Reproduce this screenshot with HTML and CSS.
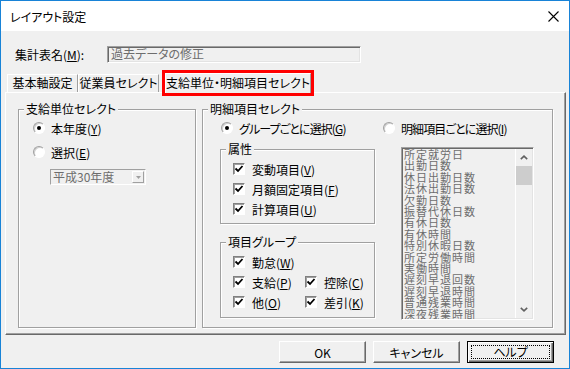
FILE: index.html
```html
<!DOCTYPE html>
<html lang="ja">
<head>
    <meta charset="UTF-8">
    <title>レイアウト設定</title>
    <link rel="stylesheet" href="styles.css">
</head>
<body>
    <div class="window">
        <div class="titlebar">
            <span class="title">レイアウト設定</span>
            <svg class="close" width="11" height="11" viewBox="0 0 11 11">
                <path d="M0.5 0.5 L10.5 10.5 M10.5 0.5 L0.5 10.5" stroke="#000" stroke-width="1.1" fill="none"/>
            </svg>
        </div>

        <div class="client">
            <div class="name-row">
                <label>集計表名(<u>M</u>):</label>
                <div class="textbox">過去データの修正</div>
            </div>

            <div class="tabs">
                <div class="tab tab-base">基本軸設定</div>
                <div class="tab tab-staff">従業員セレクト</div>
                <div class="tab active">支給単位・明細項目セレクト</div>
            </div>

            <div class="panel">
                <!-- 支給単位 -->
                <div class="group g-unit">
                    <span class="legend">支給単位セレクト</span>
                    <div class="unit-body">
                        <div class="opt"><span class="radio on"></span>本年度(<u>Y</u>)</div>
                        <div class="opt"><span class="radio"></span>選択(<u>E</u>)</div>
                        <div class="combo">
                            <span class="combo-text">平成30年度</span>
                            <span class="combo-btn">
                                <svg width="5" height="3" viewBox="0 0 5 3"><path d="M0 0 H5 L2.5 3 Z" fill="#a0a0a0"/></svg>
                            </span>
                        </div>
                    </div>
                </div>

                <!-- 明細項目 -->
                <div class="group g-detail">
                    <span class="legend">明細項目セレクト</span>
                    <div class="detail-body">
                        <div class="opt opt-g"><span class="radio on"></span><span class="kana">グループごとに選択(<u>G</u>)</span></div>
                        <div class="opt"><span class="radio"></span><span class="kana">明細項目ごとに選択(<u>I</u>)</span></div>

                        <div class="stack">
                            <div class="group g-attr">
                                <span class="legend">属性</span>
                                <div class="check-list">
                                    <div class="opt"><span class="check"><svg width="10" height="10" viewBox="0 0 10 10"><path d="M1.5 4.5 L4 7 L8.5 2" stroke="#000" stroke-width="1.8" fill="none"/></svg></span>変動項目(<u>V</u>)</div>
                                    <div class="opt"><span class="check"><svg width="10" height="10" viewBox="0 0 10 10"><path d="M1.5 4.5 L4 7 L8.5 2" stroke="#000" stroke-width="1.8" fill="none"/></svg></span>月額固定項目(<u>F</u>)</div>
                                    <div class="opt"><span class="check"><svg width="10" height="10" viewBox="0 0 10 10"><path d="M1.5 4.5 L4 7 L8.5 2" stroke="#000" stroke-width="1.8" fill="none"/></svg></span>計算項目(<u>U</u>)</div>
                                </div>
                            </div>

                            <div class="group g-kind">
                                <span class="legend">項目グループ</span>
                                <div class="check-grid">
                                    <div class="opt wide"><span class="check"><svg width="10" height="10" viewBox="0 0 10 10"><path d="M1.5 4.5 L4 7 L8.5 2" stroke="#000" stroke-width="1.8" fill="none"/></svg></span>勤怠(<u>W</u>)</div>
                                    <div class="opt"><span class="check"><svg width="10" height="10" viewBox="0 0 10 10"><path d="M1.5 4.5 L4 7 L8.5 2" stroke="#000" stroke-width="1.8" fill="none"/></svg></span>支給(<u>P</u>)</div>
                                    <div class="opt"><span class="check"><svg width="10" height="10" viewBox="0 0 10 10"><path d="M1.5 4.5 L4 7 L8.5 2" stroke="#000" stroke-width="1.8" fill="none"/></svg></span>控除(<u>C</u>)</div>
                                    <div class="opt"><span class="check"><svg width="10" height="10" viewBox="0 0 10 10"><path d="M1.5 4.5 L4 7 L8.5 2" stroke="#000" stroke-width="1.8" fill="none"/></svg></span>他(<u>O</u>)</div>
                                    <div class="opt"><span class="check"><svg width="10" height="10" viewBox="0 0 10 10"><path d="M1.5 4.5 L4 7 L8.5 2" stroke="#000" stroke-width="1.8" fill="none"/></svg></span>差引(<u>K</u>)</div>
                                </div>
                            </div>
                        </div>

                        <div class="listbox">
                            <div class="items">
                                <div>所定就労日</div>
                                <div>出勤日数</div>
                                <div>休日出勤日数</div>
                                <div>法休出勤日数</div>
                                <div>欠勤日数</div>
                                <div>振替代休日数</div>
                                <div>有休日数</div>
                                <div>有休時間</div>
                                <div>特別休暇日数</div>
                                <div>所定労働時間</div>
                                <div>実働時間</div>
                                <div>遅刻早退回数</div>
                                <div>遅刻早退時間</div>
                                <div>普通残業時間</div>
                                <div>深夜残業時間</div>
                            </div>
                            <div class="scrollbar">
                                <span class="sb-btn">
                                    <svg width="8" height="5" viewBox="0 0 8 5"><path d="M0.8 4.2 L4 1.2 L7.2 4.2" stroke="#606060" stroke-width="1.6" fill="none"/></svg>
                                </span>
                                <span class="thumb"></span>
                                <span class="track"></span>
                                <span class="sb-btn">
                                    <svg width="8" height="5" viewBox="0 0 8 5"><path d="M0.8 0.8 L4 3.8 L7.2 0.8" stroke="#606060" stroke-width="1.6" fill="none"/></svg>
                                </span>
                            </div>
                        </div>
                    </div>
                </div>
            </div>

            <div class="buttons">
                <button class="btn">OK</button>
                <button class="btn">キャンセル</button>
                <button class="btn default"><span class="focus">ヘルプ</span></button>
            </div>
        </div>
    </div>
</body>
</html>
```

FILE: styles.css
```css
* {
    margin: 0;
    padding: 0;
    box-sizing: border-box;
}

body {
    background: #fff;
    font-family: "Noto Sans CJK JP", "Noto Sans", sans-serif;
    font-size: 12px;
    font-feature-settings: "palt";
    color: #000;
}

u {
    text-underline-offset: 1px;
}

.window {
    width: 570px;
    height: 369px;
    border: 1px solid #1883d7;
    background: #f0f0f0;
    display: flex;
    flex-direction: column;
}

.titlebar {
    height: 30px;
    background: #fff;
    display: flex;
    align-items: center;
    justify-content: space-between;
    padding: 0 10px 0 9px;
}

.client {
    flex: 1;
    padding-top: 15px;
}

/* 集計表名 */
.name-row {
    display: flex;
    align-items: center;
    height: 17px;
    padding-left: 14px;
}

.name-row label {
    width: 92px;
}

.textbox {
    width: 254px;
    height: 17px;
    line-height: 14px;
    padding-left: 3px;
    color: #6d6d6d;
    border: 1px solid;
    border-color: #a0a0a0 #fff #fff #a0a0a0;
    box-shadow: inset 1px 1px 0 #696969, inset -1px -1px 0 #e3e3e3;
}

/* タブ */
.tabs {
    display: flex;
    align-items: flex-end;
    height: 21px;
    margin-top: 8px;
    padding-left: 6px;
}

.tab {
    height: 18px;
    line-height: 16px;
    text-align: center;
    border: 1px solid;
    border-bottom: none;
    border-color: #fff #a0a0a0 transparent #fff;
}

.tab-base { width: 71px; }
.tab-staff { width: 81px; }

.tab.active {
    width: 146px;
    height: 20px;
    line-height: 18px;
    margin-left: 6px;
    margin-bottom: -1px;
    background: #f0f0f0;
    outline: 3px solid #f00;
    position: relative;
    z-index: 1;
}

.panel {
    width: 561px;
    height: 243px;
    margin-left: 4px;
    display: flex;
    gap: 6px;
    padding: 16px 12px 6px 12px;
    border: 1px solid;
    border-color: #fff #696969 #696969 #fff;
    box-shadow: inset -1px -1px 0 #a0a0a0;
}

/* グループボックス */
.group {
    display: flex;
    flex-direction: column;
    border: 1px solid #a0a0a0;
    box-shadow: 1px 1px 0 #fff, inset 1px 1px 0 #fff;
}

.legend {
    align-self: flex-start;
    line-height: 16px;
    margin: -9px 0 0 5px;
    padding: 0 2px;
    background: #f0f0f0;
}

.g-unit { width: 178px; }
.g-detail { flex: 1; }

.unit-body {
    display: flex;
    flex-direction: column;
    gap: 8px;
    padding: 3px 0 0 14px;
}

.opt {
    display: flex;
    align-items: center;
    height: 16px;
    white-space: nowrap;
}

.kana {
    letter-spacing: -0.9px;
}

.radio {
    width: 12px;
    height: 12px;
    margin-right: 6px;
    border-radius: 50%;
    background: #fff;
    border: 1px solid;
    border-color: #a0a0a0 #fff #fff #a0a0a0;
    box-shadow: inset 1px 1px 0 #d0d0d0;
    display: flex;
    align-items: center;
    justify-content: center;
}

.radio.on::after {
    content: '';
    width: 4px;
    height: 4px;
    border-radius: 50%;
    background: #000;
}

.check {
    width: 12px;
    height: 12px;
    margin-right: 7px;
    background: #fff;
    border: 1px solid;
    border-color: #808080 #fff #fff #808080;
    box-shadow: inset 1px 1px 0 #a0a0a0;
    display: flex;
    align-items: center;
    justify-content: center;
}

.combo {
    display: flex;
    width: 96px;
    height: 16px;
    margin: 1px 0 0 17px;
    border: 1px solid;
    border-color: #a0a0a0 #fff #fff #a0a0a0;
}

.combo-text {
    flex: 1;
    line-height: 14px;
    padding-left: 2px;
    color: #6d6d6d;
}

.combo-btn {
    width: 12px;
    margin: 1px;
    border: 1px solid;
    border-color: #fff #a0a0a0 #a0a0a0 #fff;
    display: flex;
    align-items: center;
    justify-content: center;
}

.detail-body {
    display: grid;
    grid-template-columns: 155px 1fr;
    column-gap: 8px;
    row-gap: 11px;
    padding: 3px 0 0 17px;
}

.opt-g {
    margin-left: 1px;
}

.stack {
    display: flex;
    flex-direction: column;
    gap: 18px;
    margin-top: 2px;
}

.g-attr { height: 75px; }
.g-kind { height: 76px; }

.check-list {
    display: flex;
    flex-direction: column;
    gap: 4px;
    padding: 4px 0 0 12px;
}

.check-grid {
    display: grid;
    grid-template-columns: 72px auto;
    row-gap: 4px;
    padding: 4px 0 0 12px;
}

.check-grid .wide {
    grid-column: 1 / 3;
}

/* リスト */
.listbox {
    display: flex;
    width: 133px;
    height: 173px;
    margin-left: 18px;
    border: 1px solid;
    border-color: #a0a0a0 #fff #fff #a0a0a0;
    box-shadow: inset 1px 1px 0 #696969, inset -1px -1px 0 #e3e3e3;
}

.items {
    flex: 1;
    overflow: hidden;
    padding: 1px 0 0 2px;
    color: #6d6d6d;
    font-size: 11px;
    letter-spacing: 1px;
    line-height: 11.4px;
}

.scrollbar {
    width: 17px;
    margin: 1px 1px 1px 0;
    border-left: 1px solid #fff;
    display: flex;
    flex-direction: column;
}

.sb-btn {
    height: 17px;
    display: flex;
    align-items: center;
    justify-content: center;
}

.thumb {
    height: 19px;
    background: #cdcdcd;
}

.track {
    flex: 1;
}

/* ボタン */
.buttons {
    display: flex;
    justify-content: flex-end;
    gap: 7px;
    margin-top: 6px;
    padding-right: 15px;
}

.btn {
    width: 87px;
    height: 22px;
    font: inherit;
    background: #f0f0f0;
    border: 1px solid;
    border-color: #fff #696969 #696969 #fff;
    box-shadow: inset -1px -1px 0 #a0a0a0;
}

.btn.default {
    border: 1px solid #000;
    box-shadow: inset 1px 1px 0 #fff, inset -1px -1px 0 #696969, inset -2px -2px 0 #a0a0a0;
    padding: 3px;
}

.focus {
    display: block;
    height: 14px;
    line-height: 12px;
    border: 1px dotted #000;
}
```
